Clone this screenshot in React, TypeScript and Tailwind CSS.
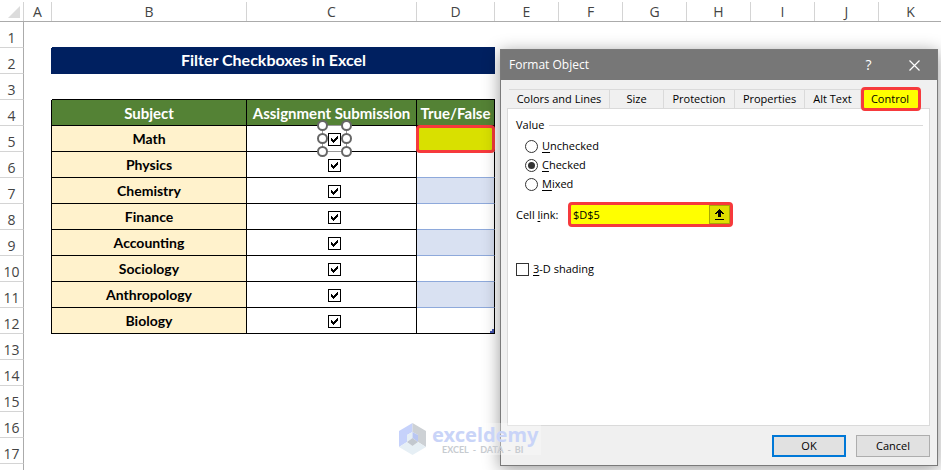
import { useState } from "react";

const columns = ["E", "F", "G", "H", "I", "J", "K"];
const subjects = ["Math", "Physics", "Chemistry", "Finance", "Accounting", "Sociology", "Anthropology", "Biology"];
const footerRows = [13, 14, 15, 16, 17];
const tabs = [
  { name: "Colors and Lines", width: "w-[101px]" },
  { name: "Size", width: "w-[54px]" },
  { name: "Protection", width: "w-[71px]" },
  { name: "Properties", width: "w-[70px]" },
  { name: "Alt Text", width: "w-[56px]" },
];

function ColumnHead({ name }: { name: string }) {
  return (
    <th scope="col" className="h-[22px] border-b border-[#ababab] p-0 pt-[2px] font-normal">
      <div className="flex h-[19px] items-center justify-center border-r border-[#d4d4d4]">{name}</div>
    </th>
  );
}

function RowHead({ n }: { n?: number }) {
  return (
    <th
      scope="row"
      className="h-[26px] border-r border-b border-r-[#ababab] border-b-[#d4d4d4] p-0 pt-[6px] text-center text-[14px] leading-[19px] font-normal text-[#444]"
    >
      {n}
    </th>
  );
}

function CellCheckbox({ subject }: { subject: string }) {
  return (
    <span className="relative block size-[13px]">
      <input
        type="checkbox"
        defaultChecked
        aria-label={`${subject} submitted`}
        className="peer block size-[13px] appearance-none border border-black bg-white"
      />
      <svg
        viewBox="0 0 13 13"
        className="pointer-events-none absolute inset-0 hidden size-[13px] peer-checked:block"
        fill="black"
        shapeRendering="crispEdges"
      >
        <path d="M3 5h1v1h1v1h1v-1h1v-1h1v-1h1v-1h1v3h-1v1h-1v1h-1v1h-1v1h-1v-1h-1v-1h-1z" />
      </svg>
    </span>
  );
}

function SelectionHandles() {
  return (
    <svg
      width="36"
      height="38"
      viewBox="0 0 36 38"
      className="pointer-events-none absolute -top-[13px] -left-[11px] max-w-none"
      fill="white"
      stroke="#666"
    >
      <rect x="5.5" y="5.5" width="24" height="26" fill="none" stroke="#999" strokeWidth="1" />
      {[5.5, 29.5].map((x) =>
        [5.5, 18.5, 31.5].map((y) => <circle key={`${x}-${y}`} cx={x} cy={y} r="4.5" strokeWidth="2" />),
      )}
    </svg>
  );
}

function Sheet() {
  return (
    <table className="w-[943px] table-fixed border-separate border-spacing-0 font-['Lato',sans-serif] text-[15px] leading-[18px] text-black">
      <colgroup>
        <col className="w-[24px]" />
        <col className="w-[28px]" />
        <col className="w-[195px]" />
        <col className="w-[170px]" />
        <col className="w-[78px]" />
        {columns.map((c) => (
          <col key={c} className="w-[64px]" />
        ))}
      </colgroup>
      <thead className="font-['Open_Sans',sans-serif] text-[14px] text-[#444]">
        <tr>
          <td className="h-[22px] border-b border-[#ababab] p-0 pt-[2px]">
            <div className="flex h-[19px] items-center justify-end border-r border-[#d4d4d4] pr-[3px]">
              <svg width="12" height="12" viewBox="0 0 12 12" fill="#dcdcdc">
                <path d="M12 0v12H0z" />
              </svg>
            </div>
          </td>
          {["A", "B", "C", "D", ...columns].map((c) => (
            <ColumnHead key={c} name={c} />
          ))}
        </tr>
      </thead>
      <tbody className="[&_th[scope=row]]:font-['Open_Sans',sans-serif]">
        <tr>
          <RowHead n={1} />
          <td className="" />
          <td colSpan={3} className="border-b border-[#002060]" />
        </tr>
        <tr>
          <RowHead n={2} />
          <td className="border-r border-[#002060]" />
          <td colSpan={3} className="bg-[#002060] p-0 pb-[2px] text-center text-[16px] font-bold text-white">
            Filter Checkboxes in Excel
          </td>
        </tr>
        <tr>
          <RowHead n={3} />
          <td />
          <td colSpan={3} className="border-b border-black" />
        </tr>
        <tr className="text-white">
          <RowHead n={4} />
          <td className="border-r border-black" />
          {["Subject", "Assignment Submission", "True/False"].map((h) => (
            <th key={h} className="border-r border-b border-black bg-[#548235] p-0 text-center font-bold whitespace-nowrap">
              {h}
            </th>
          ))}
        </tr>
        {subjects.map((s, i) => (
          <tr key={s}>
            <RowHead n={i + 5} />
            <td className="border-r border-black" />
            <td className="border-r border-b border-black bg-[#fff2cc] p-0 text-center text-[14px] font-bold">{s}</td>
            <td className="border-r border-b border-black p-0 pt-[2px] pl-[6px]">
              <div className="relative mx-auto size-[13px]">
                {i === 0 && <SelectionHandles />}
                <CellCheckbox subject={s} />
              </div>
            </td>
            <td
              className={`relative border-r border-b border-r-black p-0 ${i === 7 ? "border-b-black" : "border-b-[#8ea9db]"} ${
                i > 0 && i % 2 === 0 ? "bg-[#d9e1f2]" : ""
              }`}
            >
              {i === 0 && <span className="absolute -inset-x-px -top-px -bottom-[2px] rounded-[4px] border-3 border-[#f63a3c] bg-[#d9e000]" />}
              {i === 7 && (
                <svg width="4" height="4" className="absolute right-0 bottom-0" fill="#4456b0" shapeRendering="crispEdges">
                  <path d="M2 0h2v4H0V2h2z" />
                </svg>
              )}
            </td>
          </tr>
        ))}
        {footerRows.map((n) => (
          <tr key={n}>
            <RowHead n={n} />
          </tr>
        ))}
        <tr>
          <RowHead />
        </tr>
      </tbody>
    </table>
  );
}

function FormatDialog() {
  const [value, setValue] = useState("Checked");
  return (
    <section
      role="dialog"
      aria-label="Format Object"
      className="absolute top-[49px] left-[500px] flex h-[417px] w-[438px] flex-col border border-[#7a7a7a] bg-[#f0f0f0] font-['Open_Sans',sans-serif] text-[11px] leading-[16px] text-black shadow-[0_3px_16px_rgba(0,0,0,0.4)]"
    >
      <header className="flex h-[30px] shrink-0 items-center bg-[#777] pl-[8px] text-white">
        <h1 className="grow text-[12px]">Format Object</h1>
        <button type="button" aria-label="Help" className="w-[45px] text-[14px]">
          ?
        </button>
        <button type="button" aria-label="Close" className="flex w-[46px] justify-center">
          <svg width="11" height="11" viewBox="0 0 11 11" stroke="white" strokeWidth="1.2">
            <path d="M.5.5l10 10M10.5.5l-10 10" />
          </svg>
        </button>
      </header>
      <div className="flex grow flex-col pt-[7px] pr-[7px] pl-[6px]">
        <div role="tablist" className="flex h-[21px] items-end pl-[2px]">
          {tabs.map((t) => (
            <button
              key={t.name}
              type="button"
              role="tab"
              aria-selected={false}
              className={`h-[19px] shrink-0 border-t border-r border-[#dadada] whitespace-nowrap ${t.width}`}
            >
              {t.name}
            </button>
          ))}
          <button
            type="button"
            role="tab"
            aria-selected
            className="relative mb-[-3px] h-[24px] w-[60px] shrink-0 rounded-[4px] border-3 border-[#f63a3c] bg-[#ff0] pr-[2px] whitespace-nowrap"
          >
            Control
          </button>
        </div>
        <div role="tabpanel" className="flex h-[318px] shrink-0 flex-col border border-[#dadada] bg-white px-[8px] pt-[8px]">
          <fieldset>
            <div className="flex items-center gap-[5px]">
              <span>Value</span>
              <span className="mr-[-2px] h-px grow bg-[#dadada]" />
            </div>
            <div className="flex flex-col gap-[3px] pt-[5px] pl-[9px]">
              {["Unchecked", "Checked", "Mixed"].map((v) => (
                <label key={v} className="flex items-center gap-[4px]">
                  <input
                    type="radio"
                    name="value"
                    checked={value === v}
                    onChange={() => setValue(v)}
                    className="grid size-[13px] appearance-none place-content-center rounded-full border border-[#333] bg-white checked:before:size-[7px] checked:before:rounded-full checked:before:bg-[#333]"
                  />
                  <span>
                    <u className="underline-offset-2">{v[0]}</u>
                    {v.slice(1)}
                  </span>
                </label>
              ))}
            </div>
          </fieldset>
          <div className="mt-[10px] flex items-center">
            <label htmlFor="cell-link" className="w-[52px]">
              Cell <u className="underline-offset-2">l</u>ink:
            </label>
            <div className="flex h-[25px] w-[165px] rounded-[4px] border-3 border-[#f63a3c] bg-[#ff0]">
              <input id="cell-link" defaultValue="$D$5" className="min-w-0 grow bg-transparent pl-[2px] outline-none" />
              <button type="button" aria-label="Pick cell" className="flex w-[21px] items-center justify-center border border-[#a8a800] bg-[#dfdf00]">
                <svg width="9" height="11" viewBox="0 0 9 11" fill="black" shapeRendering="crispEdges">
                  <path d="M4 0h1v1h1v1h1v1h1v1h1v1H7V4H6v4H3V4H2v1H0V4h1V3h1V2h1V1h1zM0 10h9v1H0z" />
                </svg>
              </button>
            </div>
          </div>
          <label className="mt-[34px] flex items-center gap-[4px]">
            <input type="checkbox" className="size-[13px] appearance-none border border-[#333] bg-white checked:bg-[#333]" />
            <span>
              <u className="underline-offset-2">3</u>-D shading
            </span>
          </label>
        </div>
        <div className="flex justify-end gap-[10px] pt-[9px]">
          <button type="button" className="h-[22px] w-[74px] border-2 border-[#0078d7] bg-[#e1e1e1]">
            OK
          </button>
          <button type="button" className="h-[22px] w-[74px] border border-[#adadad] bg-[#e1e1e1]">
            Cancel
          </button>
        </div>
      </div>
    </section>
  );
}

function Watermark() {
  return (
    <div className="pointer-events-none absolute top-[423px] left-[398px] flex h-[32px] w-[143px] items-center gap-[5px] bg-white/30 font-['Noto_Sans',sans-serif] font-bold">
      <svg width="29" height="32" viewBox="0 0 29 32" className="shrink-0">
        <path d="M14.500 0L1 8v16l8-5v-7l5.500-3z" fill="#c6d2fb" />
        <path d="M14.500 0L28 8v16l-8-5v-7l-5.500-3z" fill="#cdd1d5" />
        <path d="M1 24l13.500 8L28 24l-8-5-5.500 4L9 19z" fill="#e6eff5" />
        <path d="M14.500 9L9 12v7l5.500-4z" fill="#e6eff5" />
        <path d="M14.500 9l5.500 3v7l-5.500-4z" fill="#b8c6f2" />
        <path d="M9 19l5.500-4 5.500 4-5.500 4z" fill="#c2c8cf" />
      </svg>
      <div className="flex flex-col items-start">
        <span className="text-[20px] leading-[21px] text-[#c9d4f8]">exceldemy</span>
        <span className="flex gap-[4px] pl-[10px] font-['Lato',sans-serif] text-[9px] leading-[9px] text-[#c7cbd0]">
          <span>EXCEL</span>
          <span>-</span>
          <span>DATA</span>
          <span>-</span>
          <span>BI</span>
        </span>
      </div>
    </div>
  );
}

export default function App() {
  return (
    <main className="relative h-screen overflow-hidden bg-white">
      <Sheet />
      <FormatDialog />
      <Watermark />
    </main>
  );
}
